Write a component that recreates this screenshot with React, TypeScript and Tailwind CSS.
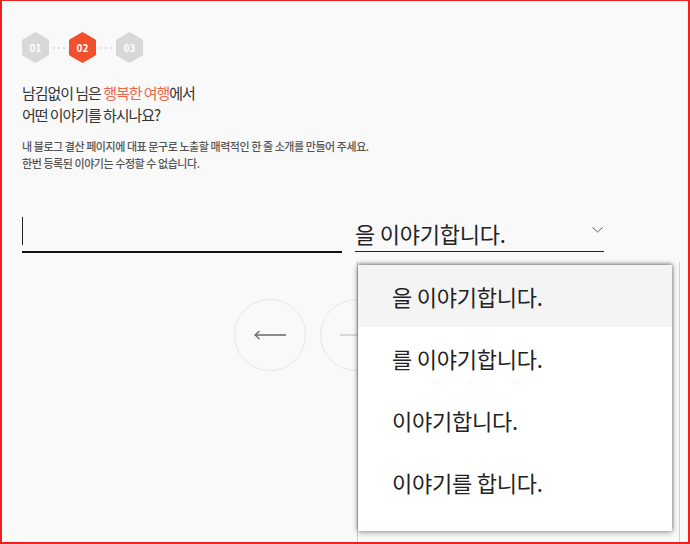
function Hex({ label, active }: { label: string; active?: boolean }) {
  return (
    <div className="relative w-[27px] h-[31px] flex items-center justify-center">
      <svg width="27" height="31" viewBox="0 0 27 31" className="absolute inset-0">
        <polygon
          points="13.5,0.5 26.5,8 26.5,23 13.5,30.5 0.5,23 0.5,8"
          fill={active ? "#f0502b" : "#d8d8d8"}
          stroke={active ? "#f0502b" : "#d8d8d8"}
          strokeLinejoin="round"
        />
      </svg>
      <span className="relative text-[10px] font-bold text-white leading-none">{label}</span>
    </div>
  );
}

function Dots() {
  return (
    <div className="flex items-center gap-[3px] mx-[4px]">
      <span className="w-[2px] h-[2px] rounded-full bg-[#d4d4d4]" />
      <span className="w-[2px] h-[2px] rounded-full bg-[#d4d4d4]" />
      <span className="w-[2px] h-[2px] rounded-full bg-[#d4d4d4]" />
    </div>
  );
}

const options = ["을 이야기합니다.", "를 이야기합니다.", "이야기합니다.", "이야기를 합니다."];

export default function App() {
  return (
    <div className="relative w-[690px] h-[544px] overflow-hidden bg-[#f9f9f9] border-[#ee2020] border-l-2 border-r-2 border-b-2 border-t font-['Noto_Sans_CJK_KR','Noto_Sans',sans-serif]">
      <div className="pl-[20px] pt-[31px] w-[602px]">
        {/* Stepper */}
        <div className="flex items-center">
          <Hex label="01" />
          <Dots />
          <Hex label="02" active />
          <Dots />
          <Hex label="03" />
        </div>

        {/* Title */}
        <h1 className="mt-[19px] text-[15px] leading-[22px] tracking-[-0.07em] text-[#333]">
          남김없이 님은 <span className="text-[#f0654a]">행복한 여행</span>에서
          <br />
          어떤 이야기를 하시나요?
        </h1>
        <p className="mt-[12px] text-[11px] leading-[17px] tracking-[-0.04em] font-medium text-[#555]">
          내 블로그 결산 페이지에 대표 문구로 노출할 매력적인 한 줄 소개를 만들어 주세요.
          <br />
          한번 등록된 이야기는 수정할 수 없습니다.
        </p>

        {/* Form row */}
        <div className="mt-[43px] flex items-end">
          <div className="w-[320px] h-[38px] border-b-2 border-[#111] pt-[2px]">
            <span className="block w-px h-[28px] bg-[#222]" />
          </div>
          <div className="ml-[13px] mb-px w-[249px] h-[37px] border-b-[1.5px] border-[#222] flex items-center justify-between">
            <span className="text-[22px] tracking-[-0.01em] text-[#222] leading-none">을 이야기합니다.</span>
            <svg width="11" height="6" viewBox="0 0 11 6" className="mr-px mt-[-6px]">
              <polyline points="0.5,0.5 5.5,5 10.5,0.5" fill="none" stroke="#555" strokeWidth="1" />
            </svg>
          </div>
        </div>

        {/* Nav buttons */}
        <div className="mt-[46px] flex justify-center gap-[14px]">
          <button className="w-[72px] h-[72px] rounded-full border border-[#e6e6e6] flex items-center justify-center">
            <svg width="34" height="10" viewBox="0 0 34 10">
              <line x1="2" y1="5" x2="33" y2="5" stroke="#666" strokeWidth="1.5" />
              <polyline points="6.5,1 2,5 6.5,9" fill="none" stroke="#666" strokeWidth="1.2" />
            </svg>
          </button>
          <button className="w-[72px] h-[72px] rounded-full border border-[#e6e6e6] flex items-center justify-center">
            <svg width="34" height="10" viewBox="0 0 34 10">
              <line x1="1" y1="5" x2="32" y2="5" stroke="#ccc" strokeWidth="1.5" />
              <polyline points="27.5,1 32,5 27.5,9" fill="none" stroke="#ccc" strokeWidth="1.2" />
            </svg>
          </button>
        </div>
      </div>

      {/* Dropdown popup */}
      <div className="absolute left-[355px] top-[261px] w-[323px] bottom-0 border-l border-r border-[#cfcfcf]" />
      <ul className="absolute left-[356px] top-[264px] w-[314px] h-[266px] bg-white shadow-[0_-1px_4px_rgba(0,0,0,0.5),0_2px_6px_rgba(0,0,0,0.25)]">
        {options.map((o, i) => (
          <li
            key={o}
            className={`h-[62px] flex items-center pl-[34px] text-[22px] tracking-[-0.01em] text-[#222] ${
              i === 0 ? "bg-[#f4f4f4]" : "bg-white"
            }`}
          >
            {o}
          </li>
        ))}
      </ul>
    </div>
  );
}
